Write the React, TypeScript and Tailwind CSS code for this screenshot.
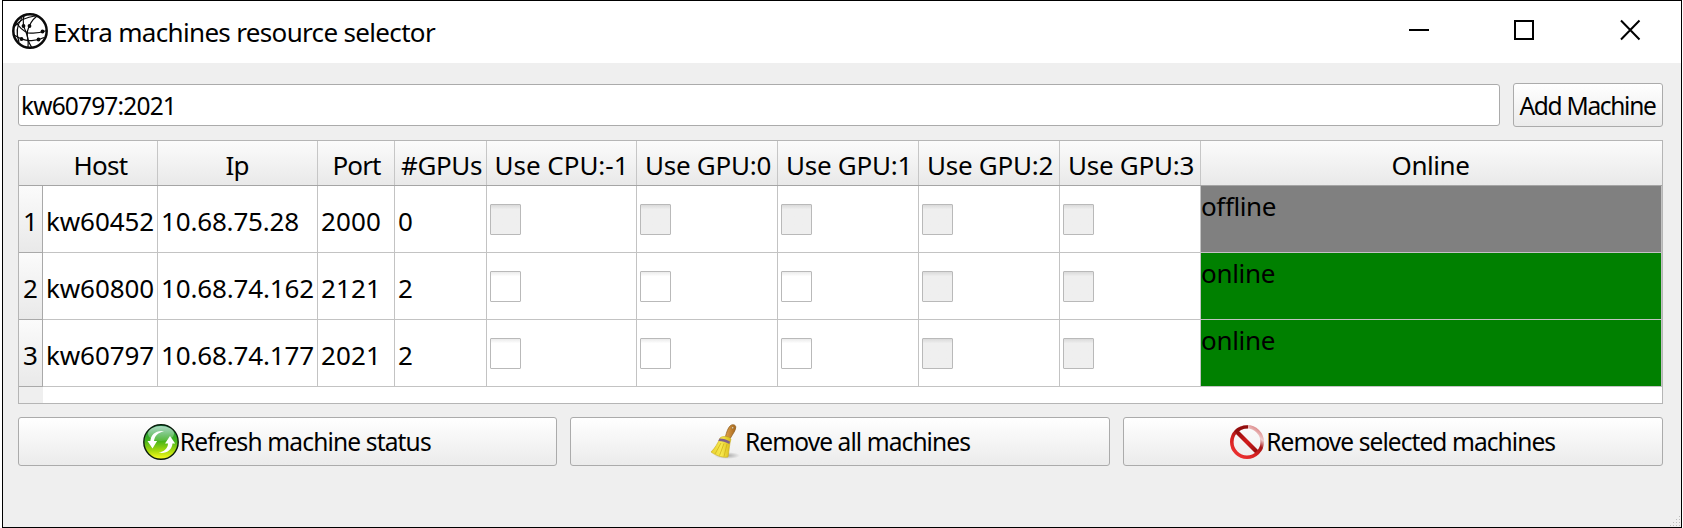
import React from "react";

const HEAD = "bg-linear-to-b from-[#fbfbfb] to-[#e9e9e9]";
const COLS = "grid grid-cols-[24px_115px_160px_77px_92px_150px_141px_141px_141px_141px_1fr]";

function T({ children, w, className = "" }: { children: string; w: number; className?: string }) {
  const ref = React.useRef<HTMLSpanElement>(null);
  const [ls, setLs] = React.useState(0);
  React.useLayoutEffect(() => {
    const el = ref.current;
    if (el) setLs((w - el.getBoundingClientRect().width) / children.length);
  }, []);
  return (
    <span ref={ref} className={"inline-block whitespace-nowrap " + className} style={{ letterSpacing: ls }}>
      {children}
    </span>
  );
}

type Row = { id: string; host: string; ip: string; ipW: number; port: string; portW: number; gpus: string; on: boolean[]; status: string };
const rows: Row[] = [
  { id: "1", host: "kw60452", ip: "10.68.75.28", ipW: 138, port: "2000", portW: 60, gpus: "0", on: [false, false, false, false, false], status: "offline" },
  { id: "2", host: "kw60800", ip: "10.68.74.162", ipW: 153, port: "2121", portW: 60, gpus: "2", on: [true, true, true, false, false], status: "online" },
  { id: "3", host: "kw60797", ip: "10.68.74.177", ipW: 153, port: "2021", portW: 60, gpus: "2", on: [true, true, true, false, false], status: "online" },
];

const headers: [string, number, string][] = [
  ["Ip", 23, "pr-px"],
  ["Port", 48, "pl-px"],
  ["#GPUs", 81, "pl-0.5"],
  ["Use CPU:-1", 134, "pl-0"],
  ["Use GPU:0", 126, "pl-0.5"],
  ["Use GPU:1", 126, "pl-0.5"],
  ["Use GPU:2", 126, "pl-0.5"],
  ["Use GPU:3", 126, "pl-0.5"],
];

function Check({ on }: { on: boolean }) {
  return (
    <div className={"h-[31px] w-[31px] rounded-[1px] border border-[#b9b9b9] " + (on ? "bg-white bg-linear-to-b from-[#ebebeb] to-white to-15%" : "bg-linear-to-b from-[#dadada] to-[#efefef] to-15%")} />
  );
}

function Globe() {
  return (
    <svg width="36" height="36" viewBox="0 0 36 36" fill="none" stroke="#0a0a0a" className="shrink-0">
      <circle cx="18" cy="18" r="16.7" strokeWidth="2.5" />
      <g strokeWidth="1.2">
        <path d="M12 2.500C10.500 8 11 13 14 19c2 5 2.500 10 2 15" />
        <path d="M25 3C20 7 17 12 15.500 18c-1 6 0 10 4 16" />
        <path d="M4 9c3 5 7 9 12 10.800 6 1 12 .2 18-2" />
        <path d="M3 13C8 7 14 4 23 3" />
        <path d="M3 22.500c9 6 20 7 29 2" />
        <path d="M10 5c-5 7-6 16-3 24" />
      </g>
      <g fill="#0a0a0a" stroke="none">
        <circle cx="11.500" cy="13" r="1.900" /><circle cx="17.500" cy="13" r="1.900" />
        <circle cx="30.500" cy="18.500" r="1.900" /><circle cx="9.500" cy="26" r="1.900" />
        <circle cx="26.500" cy="26.500" r="1.900" />
      </g>
    </svg>
  );
}

function RefreshIcon() {
  return (
    <svg width="36" height="36" viewBox="0 0 36 36" className="shrink-0">
      <defs>
        <linearGradient id="rg" x1="0" y1="0" x2="0" y2="1">
          <stop offset="0" stopColor="#149552" /><stop offset=".45" stopColor="#3fb01c" />
          <stop offset=".75" stopColor="#a5d90c" /><stop offset="1" stopColor="#ffff20" />
        </linearGradient>
        <linearGradient id="rs" x1="0" y1="0" x2="0" y2="1">
          <stop offset="0" stopColor="#fff" stopOpacity=".65" /><stop offset="1" stopColor="#fff" stopOpacity=".12" />
        </linearGradient>
      </defs>
      <circle cx="18" cy="18" r="17.2" fill="url(#rg)" stroke="#0a1c0c" strokeWidth="1.4" />
      <ellipse cx="18" cy="9.5" rx="13" ry="7.5" fill="url(#rs)" />
      <path d="M21 7.2C13 6 8 10.5 7.3 17H4.5l5 7.5 4.6-7.5h-3C11.500 12 15 8.500 21 7.200z" fill="#fff" />
      <path d="M15.500 28.600C23 30.500 29 26 29.500 19.500h2.600L27 12l-5 7.500h3C25 24 21 28 15.500 28.600z" fill="#fff" />
    </svg>
  );
}

function Broom() {
  return (
    <svg width="36" height="36" viewBox="0 0 36 36" className="shrink-0">
      <defs>
        <linearGradient id="bh" x1="0" y1="0" x2="1" y2="0">
          <stop offset="0" stopColor="#e0a24b" /><stop offset="1" stopColor="#a8671c" />
        </linearGradient>
        <linearGradient id="bb" x1="0" y1="0" x2="1" y2="0">
          <stop offset="0" stopColor="#e8cf2c" /><stop offset=".5" stopColor="#f8ea50" /><stop offset="1" stopColor="#d8ba18" />
        </linearGradient>
        <radialGradient id="bs"><stop offset="0" stopColor="#000" stopOpacity=".3" /><stop offset="1" stopColor="#000" stopOpacity="0" /></radialGradient>
      </defs>
      <ellipse cx="20" cy="31.500" rx="13" ry="3.500" fill="url(#bs)" />
      <path d="M18.500 12.500c1-4 2.500-9 5-11 2-1.500 5-1 5.300 1.500.2 3-3 7-5.300 11z" fill="url(#bh)" stroke="#8a5a1c" strokeWidth=".7" />
      <circle cx="25.700" cy="3.800" r="1" fill="#fff3d8" stroke="#80531a" strokeWidth=".5" />
      <path d="M13 14c2-2.200 9-2 11 1l-1 4c-1 5-1 9-2 14-4 .8-11-.5-17-5 4-4 7-9 9-14z" fill="url(#bb)" stroke="#c9ad1c" strokeWidth=".6" />
      <path d="M14 19L8 30M17 19.500L12.500 31.500M20 20l-3 12.500" stroke="#cfb21c" strokeWidth=".8" fill="none" />
      <path d="M12.500 14.500c4 0 7 1 10.500 3l-.7 2.400c-3.500-2-7-3-11-3z" fill="#80618b" />
    </svg>
  );
}

function NoEntry() {
  return (
    <svg width="36" height="36" viewBox="0 0 36 36" className="shrink-0" fill="none">
      <defs>
        <linearGradient id="nr" x1=".15" y1="1" x2=".85" y2="0">
          <stop offset="0" stopColor="#ef3434" /><stop offset=".35" stopColor="#d52020" />
          <stop offset=".6" stopColor="#a51616" /><stop offset=".78" stopColor="#f0cccc" /><stop offset="1" stopColor="#d98080" />
        </linearGradient>
        <linearGradient id="nb" gradientUnits="userSpaceOnUse" x1="7" y1="7" x2="29" y2="29"><stop offset="0" stopColor="#8c0b0b" /><stop offset=".5" stopColor="#d31c1c" /><stop offset="1" stopColor="#8c0b0b" /></linearGradient>
      </defs>
      <path d="M7 7L29 29" stroke="url(#nb)" strokeWidth="4.200" />
      <circle cx="18" cy="18" r="15.200" stroke="url(#nr)" strokeWidth="3.600" />
      <path d="M6.500 8.200C9.500 4.500 13 2.900 19 2.900" stroke="#920d0d" strokeWidth="3.200" />
    </svg>
  );
}

const BTN = "flex items-center rounded-[3px] border border-[#ababab] bg-linear-to-b from-white to-[#ebebeb] whitespace-pre";

export default function App() {
  return (
    <div className="flex h-[528px] w-[1683px] bg-white pr-px pl-[2px] font-['Noto_Sans',sans-serif] text-[26px] leading-[36px] text-black">
      <div className="flex min-w-0 flex-1 flex-col border border-black bg-[#efefef]">
        <div className="flex h-[62px] shrink-0 items-center bg-white pl-[9px]">
          <div className="-mt-[3px] flex"><Globe /></div>
          <div className="ml-[5px] -mt-px"><T w={382}>Extra machines resource selector</T></div>
          <svg className="ml-auto mr-[40px] -mt-[4px]" width="232" height="22" viewBox="0 0 232 22" fill="none" stroke="#000" strokeWidth="2">
            <path d="M0 11H20M106 2h18v18h-18z" />
            <path d="M212 1.500l18.500 19M230.500 1.500l-18.500 19" />
          </svg>
        </div>

        <div className="mt-5 flex h-[44px] shrink-0 items-center gap-[13px] pr-[18px] pl-[15px] text-[24.500px]">
          <div className="flex h-[42px] flex-1 items-center rounded-[3px] border border-[#ababab] bg-white pt-[2px] pl-[2px]">
            <T w={155}>kw60797:2021</T>
          </div>
          <div className={BTN + " h-[44px] w-[150px] justify-center pt-[2px] pr-px"}><T w={136}>Add Machine</T></div>
        </div>

        <div className="mt-[13px] mr-[18px] ml-[15px] flex h-[264px] shrink-0 flex-col border border-[#b5b5b5] bg-white">
          <div className={COLS + " h-[45px] border-b border-[#a5a5a5] " + HEAD}>
            <div className="col-span-2 flex items-center justify-center border-r border-[#c6c6c6] pt-[3px] pl-[25px]"><T w={54}>Host</T></div>
            {headers.map(([t, w, c]) => (
              <div key={t} className={"flex items-center justify-center border-r border-[#c6c6c6] pt-[3px] " + c}><T w={w}>{t}</T></div>
            ))}
            <div className="flex items-center justify-center pt-[3px] pr-[2px]"><T w={78}>Online</T></div>
          </div>
          {rows.map((r) => (
            <div key={r.id} className={COLS + " h-[67px]"}>
              <div className={"flex items-center justify-center border-r border-b border-[#a9a9a9] pt-[3px] " + HEAD}>{r.id}</div>
              <div className="flex items-center border-r border-b border-[#c3c3c3] pt-[3px] pl-[3px]"><T w={108}>{r.host}</T></div>
              <div className="flex items-center border-r border-b border-[#c3c3c3] pt-[3px] pl-[3px]"><T w={r.ipW}>{r.ip}</T></div>
              <div className="flex items-center border-r border-b border-[#c3c3c3] pt-[3px] pl-[3px]"><T w={r.portW}>{r.port}</T></div>
              <div className="flex items-center border-r border-b border-[#c3c3c3] pt-[3px] pl-[3px]">{r.gpus}</div>
              {r.on.map((on, i) => (
                <div key={i} className="flex items-center border-r border-b border-[#c3c3c3] pt-px pl-[3px]"><Check on={on} /></div>
              ))}
              <div className={"border-r border-b border-[#c3c3c3] pt-[2px] " + (r.status === "online" ? "bg-[#008000]" : "bg-[#808080]")}>
                <T w={r.status === "online" ? 74 : 75}>{r.status}</T>
              </div>
            </div>
          ))}
          <div className="w-[24px] flex-1 bg-[#efefef]" />
        </div>

        <div className="mt-[13px] flex h-[49px] shrink-0 gap-[13px] pr-[18px] pl-[15px] text-[24.500px]">
          <div className={BTN + " flex-1 justify-center gap-px pr-px"}><RefreshIcon /><T w={251}>Refresh machine status</T></div>
          <div className={BTN + " flex-1 justify-center gap-[2px] pr-[3px]"}><Broom /><T w={225}>Remove all machines</T></div>
          <div className={BTN + " flex-1 justify-center gap-px pr-[2px]"}><NoEntry /><T w={289}>Remove selected machines</T></div>
        </div>
        <div className="mt-auto flex justify-end">
          <svg width="11" height="11" viewBox="0 0 11 11" fill="#bcbcbc">
            <path d="M9 0h1v1h-1zM6 3h1v1h-1zM9 3h1v1h-1zM3 6h1v1h-1zM6 6h1v1h-1zM9 6h1v1h-1zM0 9h1v1h-1zM3 9h1v1h-1zM6 9h1v1h-1zM9 9h1v1h-1z" />
          </svg>
        </div>
      </div>
    </div>
  );
}
